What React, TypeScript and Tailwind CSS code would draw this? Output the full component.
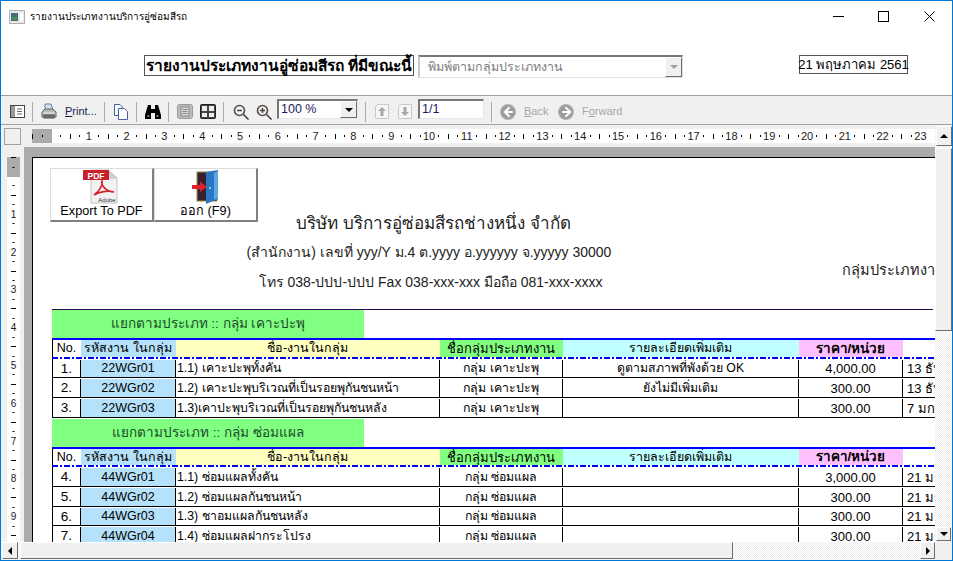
import type { ReactNode } from 'react';

const FONT = "font-['Liberation_Sans','Noto_Sans','DejaVu_Sans',sans-serif]";
const RAISED =
  'border border-t-white border-l-white border-r-[#6e6e6e] border-b-[#6e6e6e] bg-[#f0f0f0]';
const COLS = 'grid-cols-[28px_95px_264px_123px_236px_104px_146px]';

type Job = {
  no: string;
  code: string;
  name: string;
  group: string;
  detail: string;
  price: string;
  date: string;
  h: string;
};

const GROUP_A: Job[] = [
  { no: '1.', code: '22WGr01', name: '1.1) เคาะปะพุทั้งคัน', group: 'กลุ่ม เคาะปะพุ', detail: 'ดูตามสภาพที่พังด้วย OK', price: '4,000.00', date: '13 ธันวาคม 2560', h: 'h-[19px]' },
  { no: '2.', code: '22WGr02', name: '1.2) เคาะปะพุบริเวณที่เป็นรอยพุกันชนหน้า', group: 'กลุ่ม เคาะปะพุ', detail: 'ยังไม่มีเพิ่มเติม', price: '300.00', date: '13 ธันวาคม 2560', h: 'h-[20px]' },
  { no: '3.', code: '22WGr03', name: '1.3)เคาปะพุบริเวณที่เป็นรอยพุกันชนหลัง', group: 'กลุ่ม เคาะปะพุ', detail: '', price: '300.00', date: '7 มกราคม 2561', h: 'h-[20px]' },
];

const GROUP_B: Job[] = [
  { no: '4.', code: '44WGr01', name: '1.1) ซ่อมแผลทั้งคัน', group: 'กลุ่ม ซ่อมแผล', detail: '', price: '3,000.00', date: '21 มกราคม 2561', h: 'h-[20px]' },
  { no: '5.', code: '44WGr02', name: '1.2) ซ่อมแผลกันชนหน้า', group: 'กลุ่ม ซ่อมแผล', detail: '', price: '300.00', date: '21 มกราคม 2561', h: 'h-[20px]' },
  { no: '6.', code: '44WGr03', name: '1.3) ชาอมแผลกันชนหลัง', group: 'กลุ่ม ซ่อมแผล', detail: '', price: '300.00', date: '21 มกราคม 2561', h: 'h-[19px]' },
  { no: '7.', code: '44WGr04', name: '1.4) ซ่อมแผลฝากระโปรง', group: 'กลุ่ม ซ่อมแผล', detail: '', price: '300.00', date: '21 มกราคม 2561', h: 'h-[20px]' },
];

export default function App() {
  return (
    <div className={`${FONT} flex h-[561px] w-[953px] flex-col overflow-hidden border border-[#0078d7] bg-white text-black`}>
      <TitleBar />
      <FormHeader />
      <Toolbar />
      <div className="flex min-h-0 flex-1">
        <div className="flex min-w-0 flex-1 flex-col">
          <HRuler />
          <div className="flex min-h-0 flex-1">
            <VRuler />
            <ReportView />
          </div>
        </div>
        <VScroll />
      </div>
      <HScroll />
    </div>
  );
}

function TitleBar() {
  return (
    <div className="flex h-[31px] shrink-0 items-center pl-2">
      <svg width="16" height="14" viewBox="0 0 16 14">
        <rect x="0.5" y="0.5" width="15" height="13" fill="#e8e8e8" stroke="#b0b0b0" />
        <rect x="2" y="3" width="7" height="8" fill="#3f6f7f" />
        <rect x="3" y="7" width="5" height="3" fill="#4f8f4f" />
        <rect x="11" y="3" width="3" height="8" fill="#ffffff" />
      </svg>
      <span className="ml-[5px] text-[10px]">รายงานประเภทงานบริการอู่ซ่อมสีรถ</span>
      <div className="ml-auto flex items-center text-[#111]">
        <span className="h-px w-[11px] bg-black" />
        <span className="ml-[34px] h-[11px] w-[11px] border border-black" />
        <svg className="mr-[17px] ml-[35px]" width="11" height="11" viewBox="0 0 11 11">
          <path d="M0.5 0.5 L10.5 10.5 M10.5 0.5 L0.5 10.5" stroke="#000" fill="none" />
        </svg>
      </div>
    </div>
  );
}

function FormHeader() {
  return (
    <div className="flex h-[63px] shrink-0 items-start pt-[23px]">
      <div className="ml-[143px] flex h-[21px] w-[270px] items-center justify-center border border-[#555] text-[15.5px] leading-none font-bold whitespace-nowrap">
        รายงานประเภทงานอู่ซ่อมสีรถ ที่มีขณะนี้
      </div>
      <div className="ml-[4px] flex h-[23px] w-[265px] items-center border border-t-2 border-l-2 border-[#e0e0e0] border-t-[#777] border-l-[#c8c8c8] pl-[8px] text-[12.5px] text-[#808080]">
        พิมพ์ตามกลุ่มประเภทงาน
        <span className={`${RAISED} ml-auto flex h-full w-[17px] items-center justify-center`}>
          <Arrow dir="down" color="#a0a0a0" />
        </span>
      </div>
      <div className="ml-[116px] flex h-[19px] w-[109px] items-center justify-center border border-[#555] text-[13px] leading-none whitespace-nowrap">
        21 พฤษภาคม 2561
      </div>
    </div>
  );
}

function Arrow({ dir, color = '#000' }: { dir: 'up' | 'down' | 'left' | 'right'; color?: string }) {
  const d = {
    up: 'M0 5 L4 1 L8 5 Z',
    down: 'M0 1 L8 1 L4 5 Z',
    left: 'M6 0 L6 8 L2 4 Z',
    right: 'M2 0 L2 8 L6 4 Z',
  }[dir];
  const box = dir === 'up' || dir === 'down' ? '0 0 8 6' : '0 0 8 8';
  const h = dir === 'up' || dir === 'down' ? 6 : 8;
  return (
    <svg width="8" height={h} viewBox={box}>
      <path d={d} fill={color} />
    </svg>
  );
}

function Sep({ className }: { className: string }) {
  return <span className={`h-[20px] w-px bg-[#a8a8a8] ${className}`} />;
}

function Toolbar() {
  return (
    <div className="flex h-[30px] shrink-0 items-center border-y border-[#a0a0a0] bg-[#f0f0f0] pt-[3px] text-[11px]">
      <svg className="ml-[9px]" width="15" height="13" viewBox="0 0 15 13">
        <rect x="0.5" y="0.5" width="14" height="12" fill="#fff" stroke="#444" />
        <rect x="1" y="1" width="4" height="11" fill="#9a9a9a" />
        <path d="M7 4 H12 M7 6.5 H12 M7 9 H12" stroke="#666" />
      </svg>
      <Sep className="ml-[7px]" />
      <svg className="ml-[8px]" width="16" height="17" viewBox="0 0 16 17">
        <path d="M4 1 L10 1 L12 7 L4 7 Z" fill="#cfe0f2" stroke="#708090" />
        <path d="M1 9 L4 6 L12 6 L15 9 L15 14 L1 14 Z" fill="#b8b8b8" stroke="#606060" />
        <rect x="3" y="12" width="10" height="3" fill="#777" stroke="#505050" />
        <path d="M2 10 H14" stroke="#eee" />
      </svg>
      <span className="ml-[8px] w-[31px] text-[#1a1a50]"><u>P</u>rint...</span>
      <Sep className="ml-[8px]" />
      <svg className="ml-[9px]" width="14" height="16" viewBox="0 0 14 16">
        <path d="M0.5 0.5 H6 L8 2.5 V11.5 H0.5 Z" fill="#f4f8ff" stroke="#48659a" />
        <path d="M4.5 4.5 H10.5 L13.5 7.5 V15.5 H4.5 Z" fill="#fff" stroke="#48659a" />
      </svg>
      <Sep className="ml-[8px]" />
      <svg className="ml-[8px]" width="16" height="14" viewBox="0 0 16 14">
        <path d="M3 0 H6 V4 H10 V0 H13 L16 10 V14 H10 V8 H6 V14 H0 V10 Z" fill="#000" />
        <path d="M2.5 11 H4.5 M11.5 11 H13.5" stroke="#fff" />
      </svg>
      <Sep className="ml-[7px]" />
      <svg className="ml-[8px]" width="16" height="15" viewBox="0 0 16 15">
        <rect x="0.5" y="0.5" width="15" height="14" rx="2" fill="#bdbdbd" stroke="#9a9a9a" />
        <rect x="4" y="3" width="8" height="9" fill="#d8d8d8" stroke="#8a8a8a" />
        <path d="M5.5 5.5 H10.5 M5.5 7.5 H10.5 M5.5 9.5 H10.5" stroke="#8a8a8a" />
      </svg>
      <svg className="ml-[7px]" width="16" height="15" viewBox="0 0 16 15">
        <rect x="0.5" y="0.5" width="15" height="14" rx="1" fill="#444" stroke="#222" />
        <rect x="2" y="2" width="5" height="5" fill="#eee" />
        <rect x="9" y="2" width="5" height="5" fill="#eee" />
        <rect x="2" y="9" width="5" height="4" fill="#eee" />
        <rect x="9" y="9" width="5" height="4" fill="#eee" />
      </svg>
      <Sep className="ml-[7px]" />
      <ZoomIcon plus={false} className="ml-[9px]" />
      <ZoomIcon plus className="ml-[7px]" />
      <div className="-mt-[5px] ml-[5px] flex h-[20px] w-[81px] items-center border-2 border-r border-b border-[#777] border-r-[#e8e8e8] border-b-[#e8e8e8] bg-white pl-[2px] text-[12.5px] text-[#1a1a60]">
        100 %
        <span className={`${RAISED} ml-auto flex h-full w-[17px] items-center justify-center`}>
          <Arrow dir="down" />
        </span>
      </div>
      <Sep className="ml-[7px]" />
      <PageArrow d="M7 3 L11 7 H8.5 V12 H5.5 V7 H3 Z" className="ml-[9px]" />
      <PageArrow d="M5.5 3 H8.5 V8 H11 L7 12 L3 8 H5.5 Z" className="ml-[9px]" />
      <div className="-mt-[5px] ml-[6px] flex h-[20px] w-[66px] items-center border-2 border-r border-b border-[#777] border-r-[#e8e8e8] border-b-[#e8e8e8] bg-white pl-[2px] text-[12.5px] text-[#1a1a60]">
        1/1
      </div>
      <Sep className="ml-[7px]" />
      <NavIcon d="M9 3 L4.5 7.5 L9 12 M5 7.5 H12" className="ml-[8px]" />
      <span className="ml-[8px] w-[24px] text-[#a8a8a8]"><u>B</u>ack</span>
      <NavIcon d="M7 3 L11.5 7.5 L7 12 M11 7.5 H4" className="ml-[10px]" />
      <span className="ml-[8px] text-[#a8a8a8]">F<u>o</u>rward</span>
    </div>
  );
}

function ZoomIcon({ plus, className }: { plus: boolean; className: string }) {
  return (
    <svg className={className} width="16" height="16" viewBox="0 0 16 16">
      <circle cx="6.5" cy="6.5" r="5" fill="#f4f4f4" stroke="#5a4a45" strokeWidth="1.6" />
      <path d="M4 6.5 H9" stroke="#444" strokeWidth="1.5" />
      {plus && <path d="M6.5 4 V9" stroke="#444" strokeWidth="1.5" />}
      <path d="M10.5 10.5 L15.5 15.5" stroke="#333" strokeWidth="1.4" />
    </svg>
  );
}

function PageArrow({ d, className }: { d: string; className: string }) {
  return (
    <svg className={className} width="14" height="15" viewBox="0 0 14 15">
      <path d="M0.5 2.5 L3 0.5 H13.5 V14.5 H0.5 Z" fill="#f6f6f6" stroke="#c8c8c8" />
      <path d={d} fill="#a8a8a8" />
    </svg>
  );
}

function NavIcon({ d, className }: { d: string; className: string }) {
  return (
    <svg className={className} width="16" height="16" viewBox="0 0 15 15">
      <circle cx="7.5" cy="7.5" r="7" fill="#9c9c9c" stroke="#b4b4b4" />
      <path d={d} fill="none" stroke="#fff" strokeWidth="1.8" />
    </svg>
  );
}

const CM = 37.8;

function HRuler() {
  const marks = Array.from({ length: 96 }, (_, i) => i - 3);
  return (
    <div className="flex h-[22px] shrink-0 items-center bg-[#f0f0f0]">
      <span className="ml-[3px] h-[17px] w-[17px] shrink-0 border border-[#a0a0a0] bg-[#f0f0f0]" />
      <div className="ml-[11px] flex h-[14px] min-w-0 flex-1 overflow-hidden bg-white">
        <svg width="902" height="14" className="shrink-0">
          <rect x="0" y="0" width="20" height="14" fill="#ababab" />
          {marks.map((m) => {
            const x = 19 + (m * CM) / 4;
            if (m < 0 || m % 4 !== 0) {
              return m % 2 === 0 ? (
                <rect key={m} x={Math.round(x)} y="5" width="1" height="5" fill="#000" />
              ) : (
                <rect key={m} x={Math.round(x)} y="6" width="1" height="2" fill="#000" />
              );
            }
            if (m === 0) return null;
            return (
              <text key={m} x={x} y="11" textAnchor="middle" fontSize="11" fill="#1a1a1a">
                {m / 4}
              </text>
            );
          })}
        </svg>
      </div>
    </div>
  );
}

function VRuler() {
  const marks = Array.from({ length: 42 }, (_, i) => i - 2);
  return (
    <div className="flex w-[23px] shrink-0 flex-col bg-[#f0f0f0] pt-[10px] pl-[6px]">
      <svg width="13" height="386" className="bg-white">
        <rect x="0" y="0" width="13" height="20" fill="#ababab" />
        {marks.map((m) => {
          const y = 19 + (m * CM) / 4;
          if (m % 4 === 0) {
            if (m <= 0) return null;
            return (
              <text key={m} x="6.5" y={y + 4} textAnchor="middle" fontSize="10" fill="#1a1a1a">
                {m / 4}
              </text>
            );
          }
          return m % 2 === 0 ? (
            <rect key={m} x="4" y={Math.round(y)} width="5" height="1" fill="#000" />
          ) : (
            <rect key={m} x="5.5" y={Math.round(y)} width="2" height="1" fill="#000" />
          );
        })}
      </svg>
    </div>
  );
}

function ReportView() {
  return (
    <div className="min-w-0 flex-1 overflow-hidden bg-[#ababab] pt-[10px] pl-[8px]">
      <div className="h-[386px] w-[1100px] border-t border-l border-black bg-white pt-[10px] pl-[19px]">
        <div className="-ml-[2px] flex">
          <ReportButton label="Export To PDF" className="w-[104px]">
            <PdfIcon />
          </ReportButton>
          <ReportButton label="ออก (F9)" className="w-[104px]">
            <DoorIcon />
          </ReportButton>
        </div>
        <Letterhead />
        <div className="w-[881px]">
          <div className="h-px bg-[#2a0a4a]" />
          <JobGroup title="แยกตามประเภท :: กลุ่ม เคาะปะพุ" jobs={GROUP_A} headH="h-[17px]" />
          <div className="h-px" />
          <JobGroup title="แยกตามประเภท :: กลุ่ม ซ่อมแผล" jobs={GROUP_B} headH="h-[16px]" />
        </div>
      </div>
    </div>
  );
}

function ReportButton({ label, className, children }: { label: string; className: string; children: ReactNode }) {
  return (
    <div className={`flex h-[54px] flex-col items-center border border-r-2 border-b-2 border-[#dcdcdc] border-r-[#808080] border-b-[#808080] bg-white ${className}`}>
      <div className="h-[35px]">{children}</div>
      <span className="text-[12.7px] leading-[15px]">{label}</span>
    </div>
  );
}

function PdfIcon() {
  return (
    <svg className="-ml-[2px]" width="36" height="35" viewBox="0 0 36 35">
      <path d="M8 1 H25 L34 9 V34 H8 Z" fill="#f2f2f2" stroke="#c4c4c4" />
      <path d="M25 1 V9 H34 Z" fill="#d0d0d0" stroke="#c4c4c4" />
      <rect x="0" y="1" width="26" height="10" fill="#c8202a" />
      <text x="13" y="9.5" textAnchor="middle" fontSize="8.5" fontWeight="bold" fill="#fff">PDF</text>
      <path d="M11 26 C17 22 20 15 19 12 C18 15 22 23 31 23 C25 21 16 23 11 26 Z" fill="none" stroke="#d2232a" strokeWidth="1.6" />
      <text x="24" y="33" textAnchor="middle" fontSize="6" fill="#333">Adobe</text>
    </svg>
  );
}

function DoorIcon() {
  return (
    <svg width="28" height="35" viewBox="0 0 28 35">
      <rect x="5" y="3" width="20" height="29" fill="#2a2a2a" stroke="#a08a40" />
      <rect x="7" y="5" width="8" height="25" fill="#3a2030" />
      <path d="M14 3 L26 1 V30 L14 35 Z" fill="#2a78c4" />
      <path d="M22 4 L26 2 V29 L22 31 Z" fill="#5aa8de" />
      <circle cx="18" cy="19" r="1" fill="#bfe8ff" />
      <path d="M0 16 H8 V12.5 L15 18 L8 23 V20 H0 Z" fill="#e0202c" />
    </svg>
  );
}

function Letterhead() {
  return (
    <div className="-mt-[11px] flex h-[98px] w-[881px] items-start">
      <div className="flex w-[790px] shrink-0 flex-col items-center text-[#222]">
        <p className="pr-[27px] text-[17px] leading-[26px] whitespace-nowrap">บริษัท บริการอู่ซ่อมสีรถช่างหนึ่ง จำกัด</p>
        <p className="mt-[5px] pr-[36px] text-[14px] leading-[20px] whitespace-nowrap">(สำนักงาน) เลขที่ yyy/Y ม.4 ต.yyyy อ.yyyyyy จ.yyyyy 30000</p>
        <p className="mt-[10px] pr-[33px] text-[14px] leading-[20px] whitespace-nowrap">โทร 038-ปปป-ปปป Fax 038-xxx-xxx มือถือ 081-xxx-xxxx</p>
      </div>
      <p className="mt-[49px] text-[14.5px] leading-[20px] whitespace-nowrap text-[#222]">กลุ่มประเภทงาน</p>
    </div>
  );
}

function JobGroup({ title, jobs, headH }: { title: string; jobs: Job[]; headH: string }) {
  return (
    <div>
      <div className="flex h-[28px] w-[312px] items-center justify-center bg-[#80ff80] text-[13.5px] text-[#1c4a2c]">
        {title}
      </div>
      <div className="w-[1010px] border-t-2 border-[#0000ff]">
        <div className={`grid ${COLS} ${headH} border-l border-black text-[12.5px] leading-none`}>
          <Head className="bg-white">No.</Head>
          <Head className="bg-[#b5e1fb]">รหัสงาน ในกลุ่ม</Head>
          <Head className="bg-[#ffffc0]">ชื่อ-งานในกลุ่ม</Head>
          <Head className="bg-[#80ff80] text-[13px]">ชื่อกลุ่มประเภทงาน</Head>
          <Head className="bg-[#c0ffff]">รายละเอียดเพิ่มเติม</Head>
          <Head className="bg-[#ffc0ff] text-[13.5px] font-bold">ราคา/หน่วย</Head>
          <Head className="bg-white">วันที่เริ่มใช้งาน</Head>
        </div>
        <div className="h-[2px] bg-[repeating-linear-gradient(90deg,#0000ff_0_6px,transparent_6px_8px,#0000ff_8px_10px,transparent_10px_12px)]" />
        {jobs.map((j) => (
          <div key={j.code} className={`grid ${COLS} ${j.h} border-b border-l border-black pt-px text-[12.3px] leading-none`}>
            <Cell className="justify-center text-[13.5px]">{j.no}</Cell>
            <Cell className="justify-center bg-[#b5e1fb] text-[12.5px]">{j.code}</Cell>
            <Cell className="pl-[1px]">{j.name}</Cell>
            <Cell className="justify-center">{j.group}</Cell>
            <Cell className="justify-center">{j.detail}</Cell>
            <Cell className="justify-center text-[13px]">{j.price}</Cell>
            <Cell className="pl-[4px] text-[13px]">{j.date}</Cell>
          </div>
        ))}
      </div>
    </div>
  );
}

function Head({ className, children }: { className: string; children: ReactNode }) {
  return (
    <div className={`flex items-center justify-center overflow-hidden border-r border-black/0 whitespace-nowrap ${className}`}>
      {children}
    </div>
  );
}

function Cell({ className, children }: { className: string; children: ReactNode }) {
  return (
    <div className={`flex items-center overflow-hidden border-r border-black whitespace-nowrap ${className}`}>
      {children}
    </div>
  );
}

function VScroll() {
  return (
    <div className="flex w-[17px] shrink-0 flex-col items-center bg-[repeating-conic-gradient(#ececec_0_25%,#ffffff_0_50%)] bg-size-[2px_2px]">
      <span className={`${RAISED} mt-px flex h-[20px] w-[16px] items-center justify-center`}>
        <Arrow dir="up" />
      </span>
      <span className={`${RAISED} mt-[2px] h-[183px] w-[17px]`} />
      <span className={`${RAISED} mt-auto mb-px flex h-[14px] w-[15px] items-center justify-center`}>
        <Arrow dir="down" />
      </span>
    </div>
  );
}

function HScroll() {
  return (
    <div className="flex h-[18px] shrink-0 bg-[#f0f0f0]">
      <div className="flex min-w-0 flex-1 bg-[repeating-conic-gradient(#ececec_0_25%,#ffffff_0_50%)] bg-size-[2px_2px] pl-px">
        <span className={`${RAISED} flex h-[17px] w-[16px] items-center justify-center`}>
          <Arrow dir="left" />
        </span>
        <span className={`${RAISED} ml-[2px] h-[17px] w-[713px]`} />
        <span className={`${RAISED} ml-auto flex h-[17px] w-[15px] items-center justify-center`}>
          <Arrow dir="right" />
        </span>
      </div>
      <span className="w-[17px]" />
    </div>
  );
}
